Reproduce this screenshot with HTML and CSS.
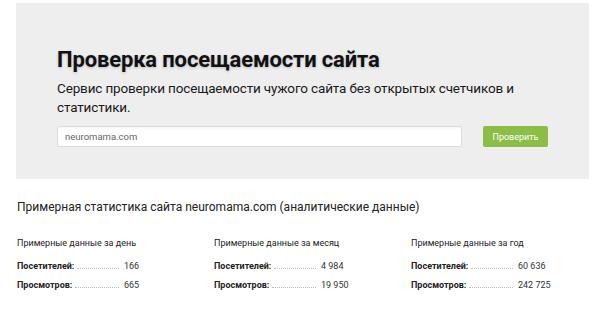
FILE: index.html
```html
<!DOCTYPE html>
<html lang="ru">
<head>
    <meta charset="UTF-8">
    <title>Проверка посещаемости сайта</title>
    <link rel="stylesheet" href="styles.css">
</head>
<body>
    <div class="hero">
        <h1>Проверка посещаемости сайта</h1>
        <p class="lead">Сервис проверки посещаемости чужого сайта без открытых счетчиков и статистики.</p>
        <form class="check-form">
            <input type="text" value="neuromama.com">
            <button type="button">Проверить</button>
        </form>
    </div>

    <div class="stats">
        <h2>Примерная статистика сайта neuromama.com (аналитические данные)</h2>
        <div class="stats-cols">
            <div class="stats-col">
                <div class="col-title">Примерные данные за день</div>
                <div class="row"><span class="label">Посетителей:</span><span class="value">166</span></div>
                <div class="row"><span class="label">Просмотров:</span><span class="value">665</span></div>
            </div>
            <div class="stats-col">
                <div class="col-title">Примерные данные за месяц</div>
                <div class="row"><span class="label">Посетителей:</span><span class="value">4 984</span></div>
                <div class="row"><span class="label">Просмотров:</span><span class="value">19 950</span></div>
            </div>
            <div class="stats-col">
                <div class="col-title">Примерные данные за год</div>
                <div class="row"><span class="label">Посетителей:</span><span class="value">60 636</span></div>
                <div class="row"><span class="label">Просмотров:</span><span class="value">242 725</span></div>
            </div>
        </div>
    </div>
</body>
</html>
```

FILE: styles.css
```css
* {
    box-sizing: border-box;
}
body {
    margin: 0;
    font-family: Roboto, 'DejaVu Sans Condensed', sans-serif;
    color: #222;
    background: #fff;
}
.hero {
    margin: 3px 11px 0 16px;
    height: 176px;
    background: #eeeeee;
    padding: 42px 41px 0 41px;
}
.hero h1 {
    margin: 0;
    font-size: 22px;
    font-weight: bold;
    letter-spacing: -0.15px;
    line-height: 30px;
    color: #111;
    text-shadow: 0 1px 3px rgba(0, 0, 0, 0.2);
}
.lead {
    margin: 4px 0 0;
    font-size: 13.5px;
    letter-spacing: -0.15px;
    line-height: 19px;
    color: #1a1a1a;
}
.check-form {
    display: flex;
    margin-top: 9px;
}
.check-form input {
    width: 405px;
    height: 21px;
    border: 1px solid #dcdcdc;
    border-radius: 2px;
    padding: 0 7px;
    font-family: inherit;
    font-size: 9.5px;
    color: #666;
    background: #fff;
    box-shadow: inset 0 1px 2px rgba(0, 0, 0, 0.05);
    outline: none;
}
.check-form button {
    margin-left: 21px;
    width: 65px;
    height: 21px;
    border: none;
    border-radius: 2px;
    background: #8cbd45;
    color: #fff;
    font-family: inherit;
    font-size: 9px;
    cursor: pointer;
}
.stats {
    padding: 19px 17px 0;
}
.stats h2 {
    margin: 0;
    font-size: 12px;
    font-weight: normal;
    line-height: 18px;
    color: #222;
}
.stats-cols {
    display: grid;
    grid-template-columns: 197px 197px 197px;
    margin-top: 20px;
}
.col-title {
    font-size: 9px;
    line-height: 14px;
    color: #222;
    margin-bottom: 9px;
}
.row {
    display: flex;
    align-items: baseline;
    font-size: 9px;
    line-height: 14px;
    margin-bottom: 5px;
}
.label {
    display: flex;
    align-items: baseline;
    width: 103px;
    font-weight: bold;
    color: #222;
}
.label::after {
    content: "";
    flex: 1;
    border-bottom: 1px dotted #bbb;
    margin: 0 1px 0 3px;
}
.value {
    margin-left: 4px;
    color: #333;
}
```
